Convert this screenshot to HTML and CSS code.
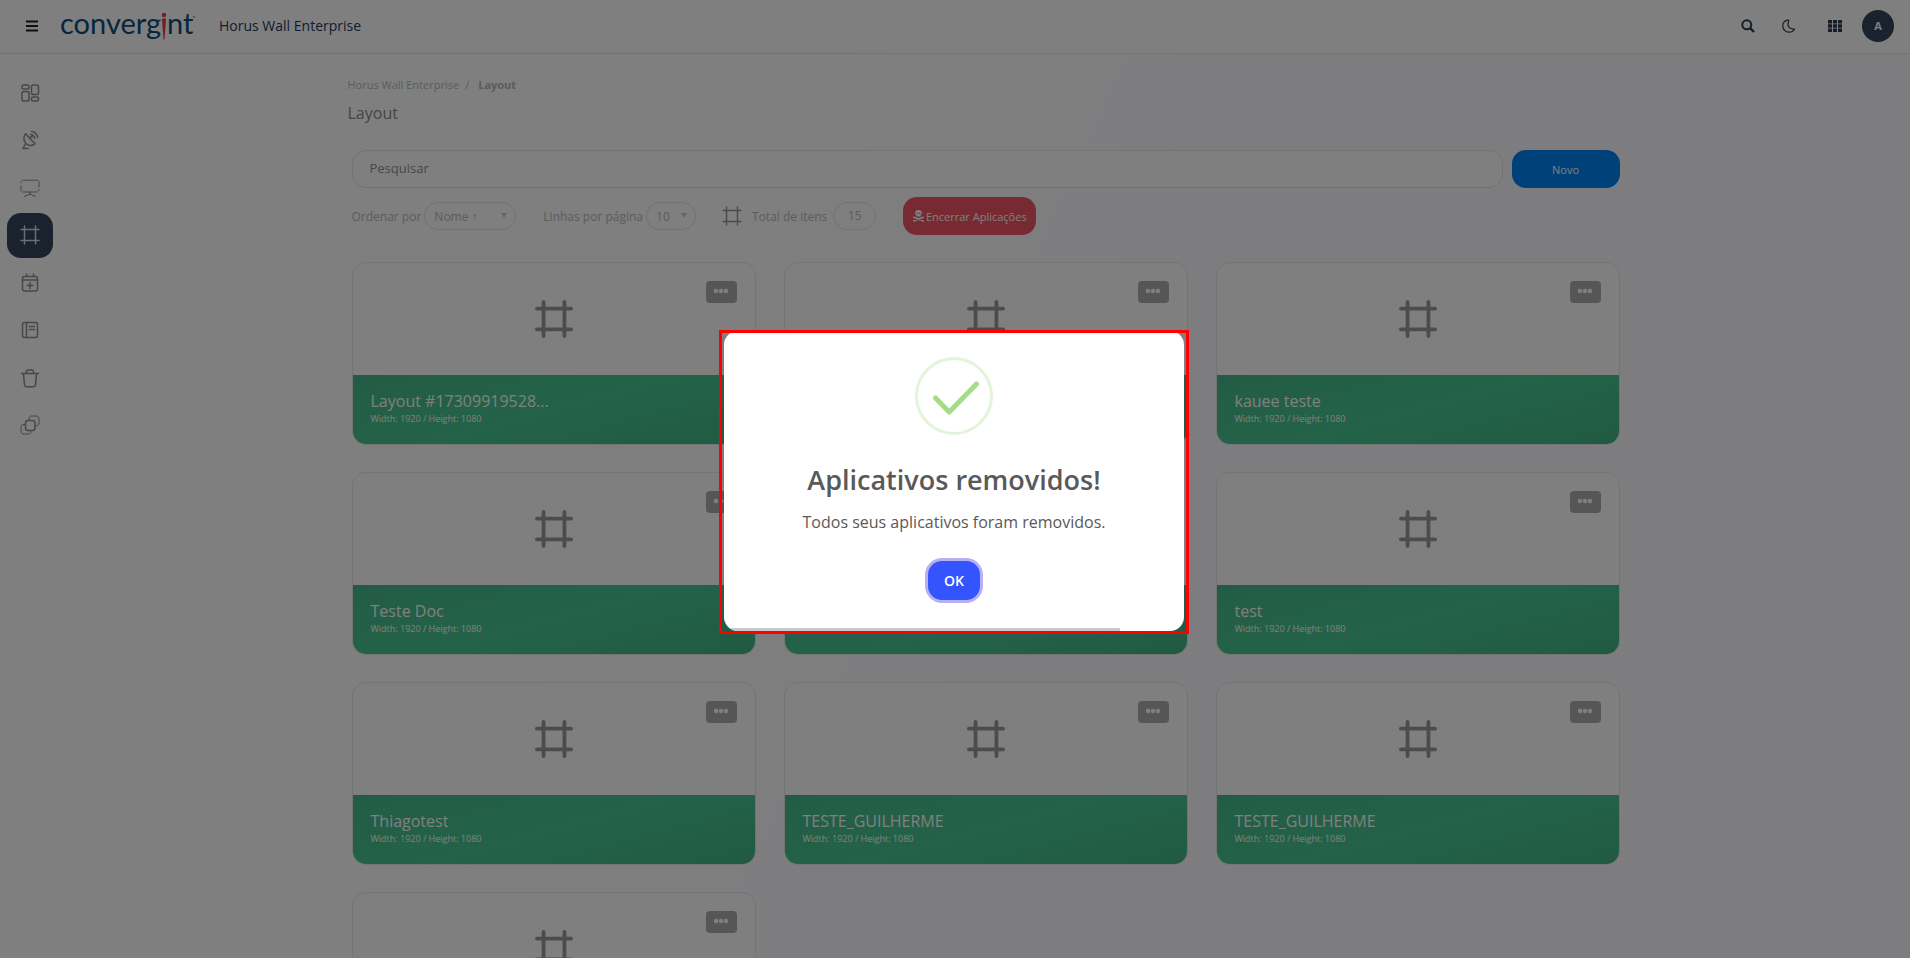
FILE: index.html
```html
<!DOCTYPE html>
<html lang="pt-BR">
<head>
    <meta charset="UTF-8">
    <meta name="viewport" content="width=device-width, initial-scale=1.0">
    <title>Horus Wall Enterprise</title>
    <link rel="stylesheet" href="styles.css">
</head>
<body>

<svg class="sprite" aria-hidden="true">
    <symbol id="frame" viewBox="0 0 40 40">
        <path d="M9 2v36M31 2v36M2 9h36M2 31h36"/>
    </symbol>
    <symbol id="dots" viewBox="0 0 16 6">
        <circle cx="3" cy="3" r="2.300"/><circle cx="8" cy="3" r="2.300"/><circle cx="13" cy="3" r="2.300"/>
    </symbol>
</svg>

<header class="topbar">
    <button class="icon-btn menu-btn" aria-label="Menu">
        <svg width="12" height="12" viewBox="0 0 12 12"><path d="M0 1.500h12M0 6h12M0 10.500h12" stroke="currentColor" stroke-width="2"/></svg>
    </button>
    <a class="logo" href="#" aria-label="convergint">
        <svg width="136" height="44" viewBox="0 0 136 44">
            <text x="0" y="30">converg</text>
            <circle class="logo-i" cx="104" cy="11" r="2.200"/>
            <path class="logo-i" d="M102 14.500h4l-1.500 21h-1z"/>
            <text x="107" y="30">nt</text>
            <circle class="logo-dot" cx="134" cy="13" r="1"/>
        </svg>
    </a>
    <span class="app-name">Horus Wall Enterprise</span>
    <div class="topbar-actions">
        <button class="icon-btn" aria-label="Buscar">
            <svg width="14" height="14" viewBox="0 0 14 14" fill="none" stroke="currentColor" stroke-width="2"><circle cx="5.800" cy="5.800" r="4.500"/><path d="M9 9l4 4" stroke-width="2.400"/></svg>
        </button>
        <button class="icon-btn moon-btn" aria-label="Modo escuro">
            <svg width="14" height="14" viewBox="0 0 14 14" fill="none" stroke="currentColor" stroke-width="1.200" stroke-linejoin="round"><path d="M6.200.9C2.900 1.500.8 3.900.8 7c0 3.500 2.700 6.200 6.200 6.200 2.400 0 4.500-1.200 5.600-3.200C8 10.700 4.300 7 6.800 2.300z"/></svg>
        </button>
        <button class="icon-btn grid-btn" aria-label="Aplicativos">
            <svg width="14" height="12" viewBox="0 0 14 12" fill="currentColor"><path d="M0 0h4v3.400H0zM5 0h4v3.400H5zM10 0h4v3.400h-4zM0 4.300h4v3.400H0zM5 4.300h4v3.400H5zM10 4.300h4v3.400h-4zM0 8.600h4V12H0zM5 8.600h4V12H5zM10 8.600h4V12h-4z"/></svg>
        </button>
        <button class="avatar">A</button>
    </div>
</header>

<div class="page">
    <nav class="sidebar">
        <a href="#" aria-label="Painel"><svg viewBox="0 0 20 20"><rect x="2" y="2" width="7" height="4" rx="1.600"/><rect x="2" y="8.500" width="7" height="9.500" rx="1.800"/><rect x="11.500" y="2" width="7" height="9.500" rx="1.800"/><rect x="11.500" y="14" width="7" height="4" rx="1.600"/></svg></a>
        <a href="#" aria-label="Fontes"><svg viewBox="0 0 20 20"><path d="M5.500 3.800c-3 4-1.500 8.200 1 10.200 2.500 2 6.500 2 8.500-.3zM9.500 7.800l2.500-1.300M5.500 13.500l-2.500 5h5M10.500 4.500c2.200 0 4 2 4 4M11.500 1.500c3.300 0 6 3 6 6"/></svg></a>
        <a href="#" aria-label="Telas"><svg class="thin" viewBox="0 0 20 20"><path d="M1 5V4.500C1 3 2 2.200 3.500 2.200h13C18 2.200 19 3 19 4.500V9M1 8v3.500C1 13 2 14 3.500 14h13c1.500 0 2.500-1 2.500-2.500M10 14v2.500M4.500 18.500L10 16l5.500 2.500"/></svg></a>
        <a class="active" href="#" aria-label="Layout"><svg viewBox="0 0 20 20"><path d="M4.500 1v18M15.500 1v18M1 4.500h18M1 15.500h18"/></svg></a>
        <a href="#" aria-label="Agenda"><svg viewBox="0 0 20 20"><rect x="2.500" y="3.500" width="15" height="14.500" rx="2"/><path d="M2.500 7h15M6.500 3.500V1M13.500 3.500V1M10 9.500v6M7 12.500h6"/></svg></a>
        <a href="#" aria-label="Registros"><svg viewBox="0 0 20 20"><rect x="2.500" y="2.500" width="15" height="15" rx="2"/><path d="M6.500 2.500v15M9.500 6.500h5M9.500 9.500h5"/></svg></a>
        <a href="#" aria-label="Lixeira"><svg viewBox="0 0 20 20"><path d="M1.500 5.500h17M3.500 5.500l1 11.500c.1 1.200.8 1.700 2 1.700h7c1.200 0 1.900-.5 2-1.700l1-11.500M6 5.500l.5-2c.2-1 .7-1.500 1.700-1.500h3.600c1 0 1.500.5 1.700 1.500l.5 2"/></svg></a>
        <a href="#" aria-label="Grupos"><svg viewBox="0 0 20 20"><rect x="5.500" y="5.500" width="9.500" height="10" rx="2.500"/><g class="thin"><path d="M9 5.500V4c0-2 1-3 3-3h4c2 0 3 1 3 3v4c0 2-1 3-3 3h-1M5.500 9.500H4c-2 0-3 1-3 3V16c0 2 1 3 3 3h4c2 0 3-1 3-3v-.5"/></g></svg></a>
    </nav>

    <main class="content">
        <div class="breadcrumb"><a href="#">Horus Wall Enterprise</a><span>/</span><strong>Layout</strong></div>
        <h1>Layout</h1>

        <div class="search-row">
            <input type="text" class="search" placeholder="Pesquisar" aria-label="Pesquisar">
            <button class="btn btn-new">Novo</button>
        </div>

        <div class="filters">
            <label for="order">Ordenar por</label>
            <span class="select order-select"><select id="order"><option>Nome ↑</option></select></span>
            <label for="lines" class="lines-label">Linhas por página</label>
            <span class="select lines-select"><select id="lines"><option>10</option></select></span>
            <svg class="frame-icon total-icon"><use href="#frame"/></svg>
            <span>Total de itens</span>
            <span class="total">15</span>
            <button class="btn btn-close">
                <svg width="11" height="12" viewBox="0 0 11 12"><path fill="currentColor" fill-rule="evenodd" d="M5.500 0C3.300 0 2 1.400 2 3c0 1.100.5 1.700 1.300 2.200v1.300h4.400V5.200C8.500 4.700 9 4.100 9 3c0-1.600-1.300-3-3.500-3zM4.200 2.500a.8.8 0 110 1.600.8.8 0 010-1.600zm2.600 0a.8.8 0 110 1.600.8.8 0 010-1.600z"/><path d="M.8 7.300l9.400 3.700M10.200 7.300L.8 11" stroke="currentColor" stroke-width="1.700" stroke-linecap="round"/></svg>
                Encerrar Aplicações
            </button>
        </div>

        <div class="cards">
            <article class="card">
                <div class="card-top">
                    <svg class="frame-icon"><use href="#frame"/></svg>
                    <button class="card-menu" aria-label="Opções"><svg><use href="#dots"/></svg></button>
                </div>
                <div class="card-info"><h2>Layout #17309919528...</h2><p>Width: 1920 / Height: 1080</p></div>
            </article>
            <article class="card">
                <div class="card-top">
                    <svg class="frame-icon"><use href="#frame"/></svg>
                    <button class="card-menu" aria-label="Opções"><svg><use href="#dots"/></svg></button>
                </div>
                <div class="card-info"><h2>&nbsp;</h2><p>Width: 1920 / Height: 1080</p></div>
            </article>
            <article class="card">
                <div class="card-top">
                    <svg class="frame-icon"><use href="#frame"/></svg>
                    <button class="card-menu" aria-label="Opções"><svg><use href="#dots"/></svg></button>
                </div>
                <div class="card-info"><h2>kauee teste</h2><p>Width: 1920 / Height: 1080</p></div>
            </article>
            <article class="card">
                <div class="card-top">
                    <svg class="frame-icon"><use href="#frame"/></svg>
                    <button class="card-menu" aria-label="Opções"><svg><use href="#dots"/></svg></button>
                </div>
                <div class="card-info"><h2>Teste Doc</h2><p>Width: 1920 / Height: 1080</p></div>
            </article>
            <article class="card">
                <div class="card-top">
                    <svg class="frame-icon"><use href="#frame"/></svg>
                    <button class="card-menu" aria-label="Opções"><svg><use href="#dots"/></svg></button>
                </div>
                <div class="card-info"><h2>&nbsp;</h2><p>Width: 1920 / Height: 1080</p></div>
            </article>
            <article class="card">
                <div class="card-top">
                    <svg class="frame-icon"><use href="#frame"/></svg>
                    <button class="card-menu" aria-label="Opções"><svg><use href="#dots"/></svg></button>
                </div>
                <div class="card-info"><h2>test</h2><p>Width: 1920 / Height: 1080</p></div>
            </article>
            <article class="card">
                <div class="card-top">
                    <svg class="frame-icon"><use href="#frame"/></svg>
                    <button class="card-menu" aria-label="Opções"><svg><use href="#dots"/></svg></button>
                </div>
                <div class="card-info"><h2>Thiagotest</h2><p>Width: 1920 / Height: 1080</p></div>
            </article>
            <article class="card">
                <div class="card-top">
                    <svg class="frame-icon"><use href="#frame"/></svg>
                    <button class="card-menu" aria-label="Opções"><svg><use href="#dots"/></svg></button>
                </div>
                <div class="card-info"><h2>TESTE_GUILHERME</h2><p>Width: 1920 / Height: 1080</p></div>
            </article>
            <article class="card">
                <div class="card-top">
                    <svg class="frame-icon"><use href="#frame"/></svg>
                    <button class="card-menu" aria-label="Opções"><svg><use href="#dots"/></svg></button>
                </div>
                <div class="card-info"><h2>TESTE_GUILHERME</h2><p>Width: 1920 / Height: 1080</p></div>
            </article>
            <article class="card">
                <div class="card-top">
                    <svg class="frame-icon"><use href="#frame"/></svg>
                    <button class="card-menu" aria-label="Opções"><svg><use href="#dots"/></svg></button>
                </div>
                <div class="card-info"></div>
            </article>
        </div>
    </main>
</div>

<div class="overlay">
    <div class="modal" role="dialog" aria-modal="true" aria-labelledby="modalTitle">
        <svg class="check" viewBox="0 0 78 78" fill="none">
            <circle cx="39" cy="39" r="37.500" stroke="#e4f4da" stroke-width="3"/>
            <path d="M20.500 41l13.700 14L61.500 27" stroke="#a5dc86" stroke-width="5" stroke-linecap="round" stroke-linejoin="round"/>
        </svg>
        <h2 id="modalTitle">Aplicativos removidos!</h2>
        <p>Todos seus aplicativos foram removidos.</p>
        <button class="btn-ok">OK</button>
        <div class="timer"><div class="timer-bar"></div></div>
    </div>
</div>

</body>
</html>
```
FILE: styles.css
```css
* {
    box-sizing: border-box;
}
body {
    margin: 0;
    height: 100vh;
    overflow: hidden;
    font-family: "Open Sans", "Noto Sans", sans-serif;
    font-size: 12px;
    color: #8a8a8a;
    background: linear-gradient(115deg, #fefefe 35%, #fafafe 60%);
}
button, input, select {
    font-family: inherit;
}
button {
    border: none;
    padding: 0;
    cursor: pointer;
}
a {
    color: inherit;
    text-decoration: none;
}
h1, h2, p {
    margin: 0;
    font-weight: 400;
}
.sprite {
    position: absolute;
    width: 0;
    height: 0;
}

/* top bar */
.topbar {
    display: flex;
    align-items: center;
    height: 54px;
    padding: 0 16px 2px 26px;
    background: #fff;
    border-bottom: 1px solid #e6e6e9;
    color: #2b3b4d;
}
.icon-btn {
    display: flex;
    background: none;
    color: inherit;
}
.menu-btn {
    color: #16202c;
}
.logo {
    margin-left: 22px;
}
.logo svg {
    display: block;
    overflow: visible;
}
.logo text {
    font-family: Lato, sans-serif;
    font-size: 29px;
    fill: #0b4e7c;
}
.logo-i {
    fill: #d8433c;
}
.logo-dot {
    fill: #7aa3bd;
}
.app-name {
    margin-left: 23px;
    font-size: 14px;
    color: #1d3a5f;
}
.topbar-actions {
    display: flex;
    align-items: center;
    margin-left: auto;
}
.moon-btn {
    margin-left: 27px;
}
.grid-btn {
    margin-left: 32px;
}
.avatar {
    width: 32px;
    height: 32px;
    margin-left: 20px;
    border-radius: 50%;
    background: #34445a;
    color: #fff;
    font-size: 11px;
    font-weight: 700;
}

/* layout */
.page {
    display: flex;
}
.sidebar {
    display: flex;
    flex-direction: column;
    justify-content: space-between;
    width: 61px;
    height: 378px;
    margin-top: 16px;
    padding-left: 7px;
}
.sidebar a {
    display: grid;
    place-items: center;
    width: 46px;
    height: 45px;
    border-radius: 14px;
    color: #8e8e8e;
}
.sidebar svg {
    width: 20px;
    height: 20px;
    fill: none;
    stroke: currentColor;
    stroke-width: 1.5;
    stroke-linecap: round;
    stroke-linejoin: round;
}
.sidebar .thin {
    stroke-width: 1;
}
.sidebar .active {
    background: #34445a;
    color: #d8dbe0;
}
.content {
    flex: 1;
    max-width: 1268px;
    margin: 0 auto;
}
.breadcrumb {
    display: flex;
    margin: 23px 0 0 -4px;
    font-size: 11px;
    line-height: 16px;
    color: #b9b9b9;
}
.breadcrumb span {
    margin: 0 9px 0 6px;
}
h1 {
    margin: 9px 0 0 -4px;
    font-size: 16px;
    line-height: 22px;
    color: #8a8a8a;
}

/* search and filters */
.search-row {
    display: flex;
    gap: 9px;
    margin-top: 26px;
}
.search {
    flex: 1;
    height: 38px;
    padding: 0 17px 2px;
    border: 1px solid #e4e4e6;
    border-radius: 14px;
    background: #fff;
    font-size: 13px;
}
.search::placeholder {
    color: #8f8f8f;
}
.btn {
    height: 38px;
    border-radius: 14px;
    color: #fff;
    font-size: 11px;
}
.btn-new {
    width: 108px;
    background: #0082f5;
}
.filters {
    display: flex;
    align-items: center;
    height: 38px;
    margin-top: 9px;
    color: #b9b9b9;
}
.select {
    position: relative;
    margin-left: 3px;
}
.select::after {
    content: "";
    position: absolute;
    top: 11px;
    right: 9px;
    border: 3px solid transparent;
    border-top: 5px solid #cacaca;
    border-bottom: none;
    pointer-events: none;
}
select {
    appearance: none;
    display: block;
    width: 100%;
    height: 28px;
    padding: 0 9px;
    border: 1px solid #e4e4e6;
    border-radius: 14px;
    background: transparent;
    color: inherit;
    font-size: 12px;
}
.order-select {
    width: 92px;
}
.lines-select {
    width: 50px;
}
.lines-label {
    margin-left: 27px;
}
.frame-icon {
    width: 38px;
    height: 38px;
    fill: none;
    stroke: #999;
    stroke-width: 4;
    stroke-linecap: round;
}
.total-icon {
    width: 20px;
    height: 20px;
    margin: 0 10px 0 26px;
    stroke-width: 3;
}
.total {
    width: 43px;
    margin-left: 6px;
    border: 1px solid #e4e4e6;
    border-radius: 14px;
    line-height: 26px;
    text-align: center;
}
.btn-close {
    display: flex;
    align-items: center;
    justify-content: center;
    gap: 2px;
    width: 133px;
    margin-left: 27px;
    background: #ee5563;
}

/* cards */
.cards {
    display: grid;
    grid-template-columns: repeat(3, 1fr);
    gap: 27px 28px;
    margin-top: 27px;
}
.card {
    height: 183px;
    border: 1px solid #e9e9ec;
    border-radius: 14px;
    background: #fff;
    overflow: hidden;
}
.card-top {
    position: relative;
    display: grid;
    place-items: center;
    height: 112px;
}
.card-menu {
    position: absolute;
    top: 18px;
    right: 18px;
    width: 31px;
    height: 22px;
    border-radius: 4px;
    background: #adadad;
}
.card-menu svg {
    display: block;
    width: 16px;
    height: 6px;
    margin: -2px auto 0;
    fill: #fff;
}
.card-info {
    height: 69px;
    padding: 15px 18px;
    background: linear-gradient(165deg, #46b88a, #46c694 50%, #42b484);
    color: #fff;
}
.card-info h2 {
    font-size: 16px;
    line-height: 22px;
}
.card-info p {
    font-size: 9px;
    line-height: 14px;
}

/* modal */
.overlay {
    position: fixed;
    inset: 0;
    display: grid;
    place-items: center;
    padding: 4px 2px 0 0;
    background: rgba(0, 0, 0, 0.5);
}
.modal {
    position: relative;
    display: flex;
    flex-direction: column;
    align-items: center;
    width: 460px;
    height: 300px;
    padding-top: 26px;
    border-radius: 14px;
    background: #fff;
    color: #595959;
}
.modal::after {
    content: "";
    position: absolute;
    inset: -1px -5px -3px;
    border: 3px solid #f00;
}
.check {
    width: 78px;
    height: 78px;
}
.modal h2 {
    margin-top: 26px;
    font-size: 27px;
    font-weight: 600;
    line-height: 38px;
}
.modal p {
    margin-top: 11px;
    font-size: 16px;
    line-height: 24px;
}
.btn-ok {
    z-index: 1;
    width: 52px;
    height: 39px;
    margin-top: 27px;
    border-radius: 14px;
    background: #3454ff;
    box-shadow: 0 0 0 3px #b8b0f5;
    color: #fff;
    font-size: 14px;
    font-weight: 600;
}
.timer {
    position: absolute;
    inset: 0;
    display: flex;
    align-items: flex-end;
    overflow: hidden;
    border-radius: 14px;
}
.timer-bar {
    width: 86%;
    height: 3px;
    background: #c6c8cc;
}
```
